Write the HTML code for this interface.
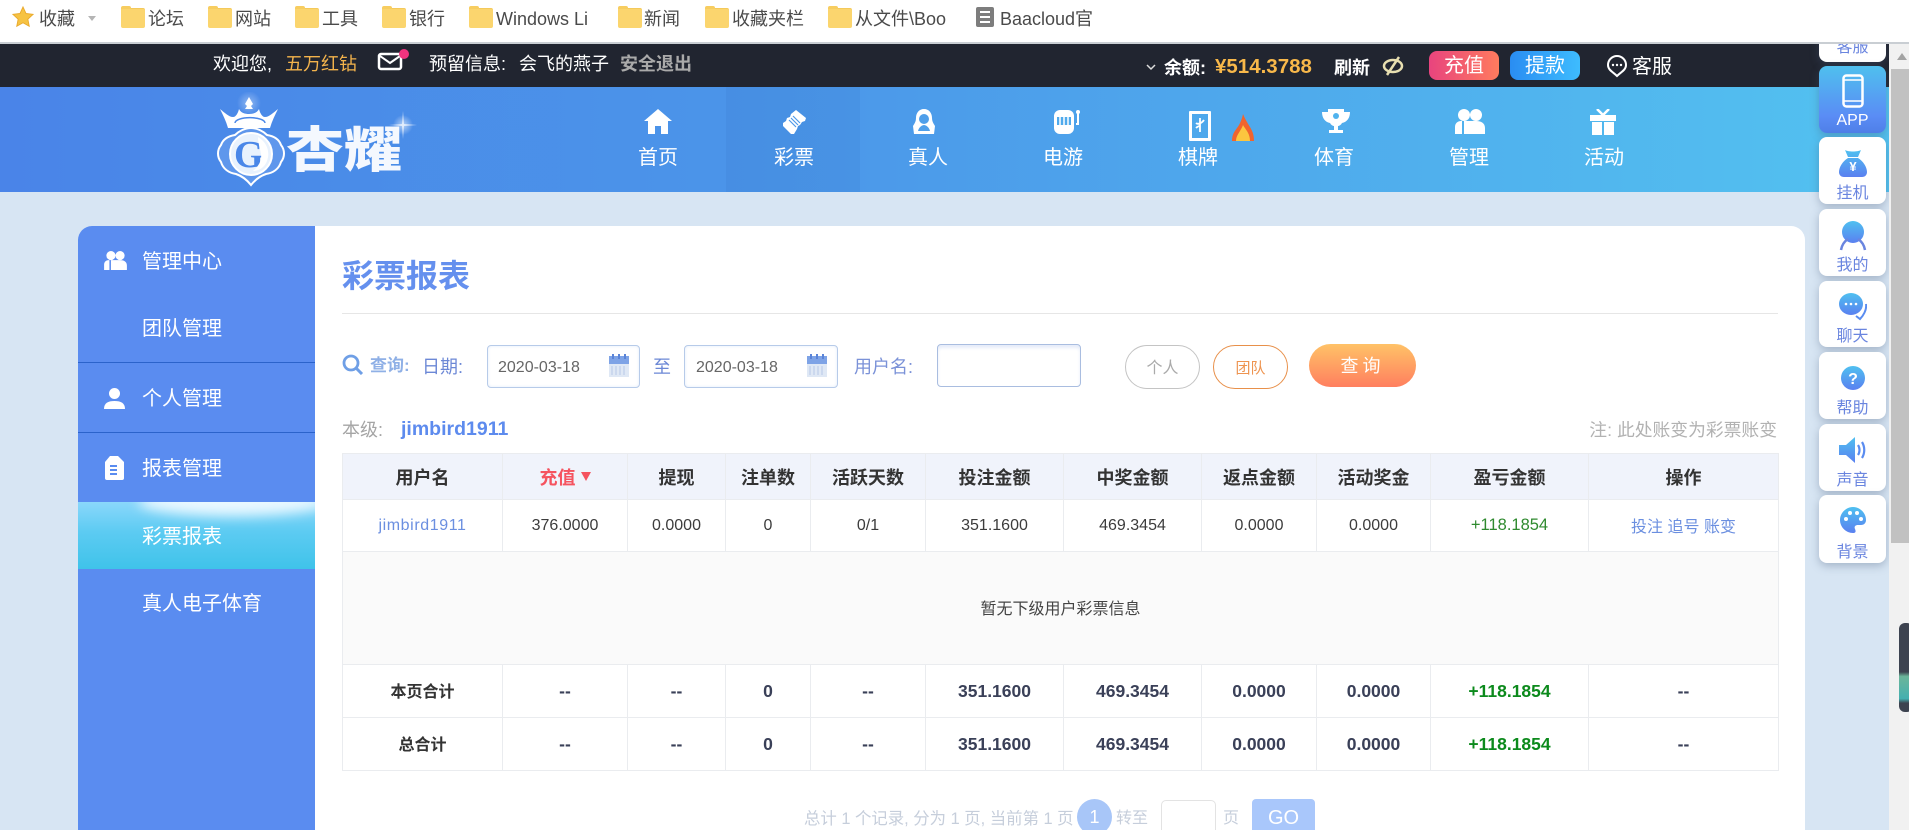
<!DOCTYPE html>
<html lang="zh-CN"><head><meta charset="utf-8"><title>彩票报表</title>
<style>
*{box-sizing:border-box}
html,body{margin:0;padding:0;width:1909px;height:830px;overflow:hidden;background:#d7e5f3;font-family:"Liberation Sans","Noto Sans CJK SC",sans-serif;color:#444}
#root{position:relative;width:1909px;height:830px;overflow:hidden}
.a{position:absolute}
.t{position:absolute;white-space:nowrap;line-height:1}
#bm{left:0;top:0;width:1909px;height:44px;background:#fff;border-bottom:2px solid #c9ced3;z-index:5}
#bm .t{font-size:18px;top:10px;color:#4a4a4a}
.f{position:absolute;top:8px;width:24px;height:20px;background:#fbd56e;border-radius:2px;border-top:1px solid #f4c95a}
.f:before{content:"";position:absolute;left:0;top:-3px;width:10px;height:3px;background:#f7cd60;border-radius:2px 2px 0 0}
#top{left:0;top:44px;width:1889px;height:43px;background:#212530}
#hd{left:0;top:87px;width:1889px;height:105px;background:linear-gradient(90deg,#4a84e8 0%,#4b95e9 40%,#53c2f0 100%)}
.n{position:absolute;top:148px;font-size:20px;color:#fff;line-height:1;transform:translateX(-50%);white-space:nowrap}
#panel{left:78px;top:226px;width:1727px;height:604px;background:#fff;border-radius:14px 14px 0 0;overflow:hidden}
#side{left:78px;top:226px;width:237px;height:604px;background:#5a8cf0;border-radius:14px 0 0 0}
.s{position:absolute;left:142px;font-size:20px;color:#fff;line-height:1;white-space:nowrap}
.hr{position:absolute;left:78px;width:237px;height:1px;background:#2b63cb}
table{position:absolute;left:342px;top:453px;width:1436px;border-collapse:collapse;table-layout:fixed;font-size:16px;color:#3c3c3c}
td,th{border:1px solid #eaecef;text-align:center;padding:0}
th{background:#f0f3fb;font-size:18px;color:#333;font-weight:700;height:46px}
.r td{height:53px}
.r.r1 td{height:52px}
.b td{font-weight:700;font-size:17.5px;color:#3a4058}
.b td:first-child{font-size:16px;color:#333;padding-bottom:3px}
.lk{color:#6b8fe0}
.inp{position:absolute;background:#fff;border:1px solid #b7cbe9;border-radius:4px;box-shadow:inset 0 0 3px #e3ecfa}
.side{position:absolute;left:1819px;width:67px;background:#fff;border-radius:8px;box-shadow:0 3px 9px rgba(70,90,120,.35);text-align:center;z-index:2}
.side span{position:absolute;left:0;right:0;bottom:2px;font-size:16px;line-height:1;color:#6a85df}
.side svg{position:absolute;left:50%;transform:translateX(-50%)}
</style></head><body>
<div id="root">

<svg width="0" height="0" style="position:absolute"><defs>
<linearGradient id="g" x1="0" y1="0" x2="0" y2="1"><stop offset="0" stop-color="#4fc0f0"/><stop offset="1" stop-color="#5a80f0"/></linearGradient>
<radialGradient id="gl"><stop offset="0" stop-color="#fff" stop-opacity=".85"/><stop offset="1" stop-color="#fff" stop-opacity="0"/></radialGradient>
</defs></svg>

<div id="bm" class="a">
<svg class="a" style="left:12px;top:6px" width="22" height="22" viewBox="0 0 24 24"><path d="M12 1l3.300 7.200 7.700.9-5.700 5.300 1.500 7.700L12 18.300 5.200 22.100l1.500-7.700L1 9.100l7.700-.9z" fill="#f6c343" stroke="#e9a92c" stroke-width="1"/></svg>
<div class="t" style="left:39px">收藏</div>
<div class="a" style="left:88px;top:16px;border:4px solid transparent;border-top:5px solid #b5b5b5"></div>
<div class="f" style="left:121px"></div><div class="t" style="left:148px">论坛</div>
<div class="f" style="left:208px"></div><div class="t" style="left:235px">网站</div>
<div class="f" style="left:295px"></div><div class="t" style="left:322px">工具</div>
<div class="f" style="left:382px"></div><div class="t" style="left:409px">银行</div>
<div class="f" style="left:469px"></div><div class="t" style="left:496px">Windows Li</div>
<div class="f" style="left:618px"></div><div class="t" style="left:644px">新闻</div>
<div class="f" style="left:705px"></div><div class="t" style="left:732px">收藏夹栏</div>
<div class="f" style="left:828px"></div><div class="t" style="left:855px">从文件\Boo</div>
<svg class="a" style="left:976px;top:7px" width="18" height="20" viewBox="0 0 18 20"><rect width="18" height="20" rx="2" fill="#7d7d7d"/><path d="M4 5h10M4 10h10M4 15h10" stroke="#fff" stroke-width="2"/></svg>
<div class="t" style="left:1000px">Baacloud官</div>
</div>

<div id="top" class="a"></div>
<div class="t" style="left:213px;top:55px;font-size:18px;color:#fff">欢迎您,</div>
<div class="t" style="left:285px;top:55px;font-size:18px;color:#f3b34c">五万红钻</div>
<svg class="a" style="left:377px;top:52px" width="27" height="19" viewBox="0 0 27 19"><rect x="2" y="2" width="22" height="15" rx="2" fill="none" stroke="#fff" stroke-width="2.500"/><path d="M3 4l10 7 10-7" fill="none" stroke="#fff" stroke-width="2"/></svg>
<div class="a" style="left:399px;top:49px;width:10px;height:10px;border-radius:50%;background:#f0347f"></div>
<div class="t" style="left:429px;top:55px;font-size:18px;color:#fff">预留信息:</div>
<div class="t" style="left:519px;top:55px;font-size:18px;color:#fff">会飞的燕子</div>
<div class="t" style="left:620px;top:55px;font-size:18px;font-weight:700;color:#aaa">安全退出</div>
<svg class="a" style="left:1146px;top:64px" width="10" height="7" viewBox="0 0 10 7"><path d="M1 1l4 4 4-4" fill="none" stroke="#ddd" stroke-width="1.500"/></svg>
<div class="t" style="left:1164px;top:59px;font-size:18px;font-weight:700;color:#fff">余额:</div>
<div class="t" style="left:1215px;top:57px;font-size:20.500px;font-weight:700;color:#f8b84a">¥514.3788</div>
<div class="t" style="left:1334px;top:59px;font-size:18px;font-weight:700;color:#fff">刷新</div>
<svg class="a" style="left:1382px;top:55px" width="23" height="22" viewBox="0 0 23 22"><ellipse cx="11" cy="11" rx="9" ry="6" fill="none" stroke="#e8dfb0" stroke-width="2.500"/><path d="M17 2L5 20" stroke="#e8dfb0" stroke-width="2.500"/></svg>
<div class="a" style="left:1429px;top:51px;width:70px;height:29px;border-radius:8px;background:linear-gradient(90deg,#e8447e,#ff7b5e);color:#fff;font-size:20px;text-align:center;line-height:31px">充值</div>
<div class="a" style="left:1510px;top:51px;width:70px;height:29px;border-radius:8px;background:linear-gradient(90deg,#2a8df2,#3ebcfe);color:#fff;font-size:20px;text-align:center;line-height:31px">提款</div>
<svg class="a" style="left:1606px;top:54px" width="22" height="24" viewBox="0 0 22 24"><path d="M11 2a9 9 0 0 1 9 9c0 5-5 7-9 11-4-4-9-6-9-11a9 9 0 0 1 9-9z" fill="none" stroke="#fff" stroke-width="2"/><circle cx="7" cy="11" r="1.200" fill="#fff"/><circle cx="11" cy="11" r="1.200" fill="#fff"/><circle cx="15" cy="11" r="1.200" fill="#fff"/></svg>
<div class="t" style="left:1632px;top:57px;font-size:20px;color:#fff">客服</div>

<div id="hd" class="a"></div>
<div class="a" style="left:726px;top:87px;width:134px;height:105px;background:rgba(30,70,150,.07)"></div>

<!-- logo -->
<svg class="a" style="left:212px;top:92px" width="80" height="98" viewBox="0 0 80 98">
<circle cx="37" cy="11" r="12" fill="url(#gl)" opacity=".45"/>
<path d="M37 5l4 7-2 2 2 3h-8l2-3-2-2z" fill="#fff"/>
<path d="M8 17c5 4 9 8 13 8 3 0 5-4 6-8 2 4 6 5 10 5s8-1 10-5c1 4 3 8 6 8 4 0 8-4 13-8-3 6-6 12-8 19H16C14 29 11 23 8 17z" fill="#fff"/>
<path d="M23 31a14 5 0 0 1 30 0" fill="none" stroke="#4a87e8" stroke-width="1.500"/>
<path d="M39 36c6 0 12 3 16 7 6 1 12 4 14 10 4 5 4 12 0 17-2 7-8 11-15 12-6 2-11 6-15 11-4-5-9-9-15-11-7-1-13-5-15-12-4-5-4-12 0-17 2-6 8-9 14-10 4-4 10-7 16-7z" fill="#5f97ec" stroke="#fff" stroke-width="2"/>
<circle cx="39" cy="62" r="21" fill="#e9f2fd" stroke="#fff" stroke-width="2"/>
<text x="22" y="75" font-family="Liberation Serif,serif" font-size="38" font-weight="700" fill="#4a87e8">G</text>
<path d="M46 45c10 6 12 16 9 24-2 6-8 10-14 10 6-5 9-11 8-17-1-6-3-11-3-17z" fill="#fff"/>
</svg>
<div class="t" style="left:286px;top:146px;font-size:58px;font-weight:900;color:#f4f8fe;font-family:'Noto Sans CJK SC',sans-serif;transform:translateY(-50%) scaleY(.84);transform-origin:50% 50%">杏耀</div>
<svg class="a" style="left:386px;top:108px" width="34" height="34" viewBox="0 0 34 34"><circle cx="17" cy="17" r="10" fill="url(#gl)" opacity=".7"/><path d="M17 3l1 13 13 1-13 1-1 13-1-13-13-1 13-1z" fill="#fff" opacity=".65"/></svg>

<!-- nav icons -->
<svg class="a" style="left:644px;top:109px" width="28" height="25" viewBox="0 0 28 25"><path d="M14 0l14 12h-4v13h-7v-8h-6v8H4V12H0z" fill="#fff"/></svg>
<svg class="a" style="left:781px;top:109px" width="26" height="26" viewBox="0 0 26 26"><path d="M15 1l10 8-1 3-3 1-2 3-2 1-1 3-3 5-3 0L2 17l0-3 3-2 1-3 3-1 1-3z" fill="#fff"/><path d="M10 9l7 7M12 7l7 7M8 11l7 7" stroke="#4f9ae9" stroke-width="1.200"/></svg>
<svg class="a" style="left:912px;top:109px" width="24" height="26" viewBox="0 0 24 26"><path d="M12 0c5 0 8 4 8 9 0 3 1 5 3 8l-1 8H2l-1-8c2-3 3-5 3-8 0-5 3-9 8-9z" fill="#fff"/><circle cx="12" cy="10" r="5" fill="#4f9fea"/><path d="M6 22c1-4 4-6 6-6s5 2 6 6z" fill="#4f9fea"/></svg>
<svg class="a" style="left:1053px;top:109px" width="28" height="26" viewBox="0 0 28 26"><rect x="1" y="1" width="20" height="24" rx="6" fill="#fff"/><rect x="4" y="8" width="14" height="8" fill="#50aaec"/><path d="M7 8v8M11 8v8M15 8v8" stroke="#fff" stroke-width="1.500"/><path d="M25 3v12h-2" stroke="#fff" stroke-width="2" fill="none"/><circle cx="25" cy="3" r="2" fill="#fff"/></svg>
<svg class="a" style="left:1189px;top:111px" width="22" height="30" viewBox="0 0 22 30"><rect width="22" height="30" rx="1" fill="#fff"/><rect x="3" y="3" width="16" height="24" fill="#4ea8ec"/><path d="M11 7v14M7 12c2 2 6 0 8-3M11 15c-2 0-3 1-4 2" stroke="#fff" stroke-width="1.800" fill="none"/></svg>
<svg class="a" style="left:1230px;top:114px" width="26" height="27" viewBox="0 0 26 27"><path d="M13 0c2 5 4 8 7 13 3 5 4 9 4 14H2c0-6 2-9 5-13 3-4 5-9 6-14z" fill="#f0642e"/><path d="M13 11c2 4 7 8 7 16H6c0-6 5-10 7-16z" fill="#fcc63f"/></svg>
<svg class="a" style="left:1322px;top:109px" width="28" height="26" viewBox="0 0 28 26"><path d="M6 0h16v3h6c0 6-3 10-8 11-1 2-3 3-4 3v4h5v3H7v-3h5v-4c-1 0-3-1-4-3C3 13 0 9 0 3h6z" fill="#fff"/><circle cx="14" cy="7" r="3" fill="#50b3ee"/></svg>
<svg class="a" style="left:1455px;top:109px" width="30" height="25" viewBox="0 0 30 25"><circle cx="9" cy="6" r="6" fill="#fff"/><circle cx="21" cy="6" r="6" fill="#fff"/><path d="M0 25v-7c0-4 3-6 6-6h1v13zM9 25V12h12c5 0 9 2 9 7v6z" fill="#fff"/></svg>
<svg class="a" style="left:1590px;top:109px" width="26" height="26" viewBox="0 0 26 26"><rect x="0" y="6" width="26" height="6" fill="#fff"/><path d="M2 13h10v13H2zM14 13h10v13H14z" fill="#fff"/><path d="M13 6L7 0M13 6l6-6" stroke="#fff" stroke-width="2.500"/></svg>

<div class="n" style="left:658px">首页</div>
<div class="n" style="left:794px">彩票</div>
<div class="n" style="left:928px">真人</div>
<div class="n" style="left:1063px">电游</div>
<div class="n" style="left:1198px">棋牌</div>
<div class="n" style="left:1334px">体育</div>
<div class="n" style="left:1469px">管理</div>
<div class="n" style="left:1604px">活动</div>

<div id="panel" class="a"></div>
<div id="side" class="a"></div>
<svg class="a" style="left:104px;top:251px" width="23" height="19" viewBox="0 0 30 25"><circle cx="9" cy="6" r="6" fill="#fff"/><circle cx="21" cy="6" r="6" fill="#fff"/><path d="M0 25v-7c0-4 3-6 6-6h1v13zM9 25V12h12c5 0 9 2 9 7v6z" fill="#fff"/></svg>
<div class="s" style="top:252px">管理中心</div>
<div class="s" style="top:319px">团队管理</div>
<div class="hr" style="top:362px"></div>
<svg class="a" style="left:104px;top:388px" width="21" height="21" viewBox="0 0 21 21"><circle cx="10.500" cy="5.500" r="5.500" fill="#fff"/><path d="M0 21c0-6 4-8 10.500-8S21 15 21 21z" fill="#fff"/></svg>
<div class="s" style="top:389px">个人管理</div>
<div class="hr" style="top:432px"></div>
<svg class="a" style="left:105px;top:456px" width="19" height="24" viewBox="0 0 19 24"><path d="M5 0h8l6 6v16a2 2 0 0 1-2 2H2a2 2 0 0 1-2-2V6z" fill="#fff"/><path d="M5 10h7M5 14h7M5 18h7" stroke="#5a8cf0" stroke-width="2"/></svg>
<div class="s" style="top:459px">报表管理</div>
<div class="a" style="left:78px;top:502px;width:237px;height:67px;overflow:hidden;background:linear-gradient(180deg,#8ad7fb 0%,#5ccbf2 45%,#3fc3ea 100%)">
<div class="a" style="left:60px;top:-14px;width:190px;height:28px;border-radius:50%;background:#e9f8ff;filter:blur(6px)"></div>
</div>
<div class="s" style="top:527px">彩票报表</div>
<div class="s" style="top:594px">真人电子体育</div>

<div class="t" style="left:342px;top:260px;font-size:32px;font-weight:700;color:#6590ee">彩票报表</div>
<div class="a" style="left:342px;top:313px;width:1436px;height:1px;background:#e6e6e6"></div>

<svg class="a" style="left:342px;top:354px" width="22" height="21" viewBox="0 0 22 21"><circle cx="9" cy="9" r="7" fill="none" stroke="#6f9fe6" stroke-width="2.800"/><path d="M14 14l6 6" stroke="#6f9fe6" stroke-width="3"/></svg>
<div class="t" style="left:370px;top:357px;font-size:17px;font-weight:700;color:#8fb0e6">查询:</div>
<div class="t" style="left:422px;top:358px;font-size:18px;color:#6c88d6">日期:</div>
<div class="inp" style="left:487px;top:345px;width:153px;height:43px"></div>
<div class="t" style="left:498px;top:360px;font-size:16px;color:#666">2020-03-18</div>
<svg class="a" style="left:609px;top:354px" width="20" height="23" viewBox="0 0 20 23"><rect y="2" width="20" height="21" fill="#dfe8f5"/><rect y="2" width="20" height="8" fill="#7ea3e6"/><path d="M4 0v5M10 0v5M16 0v5" stroke="#5a84d8" stroke-width="2"/><path d="M3 12v9M7 12v9M11 12v9M15 12v9" stroke="#b7c8e6"/></svg>
<div class="t" style="left:653px;top:358px;font-size:18px;color:#6c88d6">至</div>
<div class="inp" style="left:684px;top:345px;width:154px;height:43px"></div>
<div class="t" style="left:696px;top:360px;font-size:16px;color:#666">2020-03-18</div>
<svg class="a" style="left:807px;top:354px" width="20" height="23" viewBox="0 0 20 23"><rect y="2" width="20" height="21" fill="#dfe8f5"/><rect y="2" width="20" height="8" fill="#7ea3e6"/><path d="M4 0v5M10 0v5M16 0v5" stroke="#5a84d8" stroke-width="2"/><path d="M3 12v9M7 12v9M11 12v9M15 12v9" stroke="#b7c8e6"/></svg>
<div class="t" style="left:854px;top:358px;font-size:18px;color:#7b92d8">用户名:</div>
<div class="inp" style="left:937px;top:344px;width:144px;height:43px;border-color:#a9bde0;box-shadow:inset 0 3px 3px #e6ecf9"></div>
<div class="a" style="left:1125px;top:345px;width:75px;height:44px;border:1px solid #c4c4c4;border-radius:22px;text-align:center;font-size:16px;line-height:45px;color:#aaa">个人</div>
<div class="a" style="left:1213px;top:345px;width:75px;height:44px;border:1px solid #e8904a;border-radius:22px;text-align:center;font-size:15px;line-height:45px;color:#ee9450">团队</div>
<div class="a" style="left:1309px;top:344px;width:107px;height:43px;border-radius:22px;background:linear-gradient(180deg,#ffc267,#ff7f5f);text-align:center;font-size:18px;line-height:44px;color:#fff;letter-spacing:4px">查询</div>

<div class="t" style="left:342px;top:421px;font-size:18px;color:#a5a5a5">本级:</div>
<div class="t" style="left:401px;top:420px;font-size:19.500px;font-weight:700;color:#5d8bee">jimbird1911</div>
<div class="t" style="right:132px;top:422px;font-size:17.800px;color:#b2b2b2">注: 此处账变为彩票账变</div>

<table>
<colgroup><col style="width:160px"><col style="width:125px"><col style="width:98px"><col style="width:85px"><col style="width:115px"><col style="width:138px"><col style="width:138px"><col style="width:115px"><col style="width:114px"><col style="width:158px"><col style="width:190px"></colgroup>
<tr><th>用户名</th><th style="color:#f5535f">充值 <i style="display:inline-block;border:5.500px solid transparent;border-top:9px solid #f5535f;border-bottom:0;vertical-align:3px"></i></th><th>提现</th><th>注单数</th><th>活跃天数</th><th>投注金额</th><th>中奖金额</th><th>返点金额</th><th>活动奖金</th><th>盈亏金额</th><th>操作</th></tr>
<tr class="r r1"><td class="lk" style="letter-spacing:.6px">jimbird1911</td><td>376.0000</td><td>0.0000</td><td>0</td><td>0/1</td><td>351.1600</td><td>469.3454</td><td>0.0000</td><td>0.0000</td><td style="color:#2f8a2f;font-size:16.500px">+118.1854</td><td class="lk" style="padding-bottom:2px">投注 追号 账变</td></tr>
<tr><td colspan="11" style="height:113px;background:#fafafa;color:#444;padding-bottom:3px">暂无下级用户彩票信息</td></tr>
<tr class="r b"><td>本页合计</td><td>--</td><td>--</td><td>0</td><td>--</td><td>351.1600</td><td>469.3454</td><td>0.0000</td><td>0.0000</td><td style="color:#0c8a1c">+118.1854</td><td>--</td></tr>
<tr class="r b"><td>总合计</td><td>--</td><td>--</td><td>0</td><td>--</td><td>351.1600</td><td>469.3454</td><td>0.0000</td><td>0.0000</td><td style="color:#0c8a1c">+118.1854</td><td>--</td></tr>
</table>

<div class="t" style="left:804px;top:811px;font-size:16.400px;color:#c6cedb">总计 1 个记录, 分为 1 页, 当前第 1 页</div>
<div class="a" style="left:1077px;top:799px;width:35px;height:36px;border-radius:50%;background:#a8c6f8;color:#fff;text-align:center;font-size:18px;line-height:36px">1</div>
<div class="t" style="left:1116px;top:811px;font-size:16px;color:#c6cedb">转至</div>
<div class="a" style="left:1161px;top:800px;width:55px;height:40px;border:1px solid #e3e3e3;border-radius:5px;background:#fff"></div>
<div class="t" style="left:1223px;top:811px;font-size:16px;color:#c6cedb">页</div>
<div class="a" style="left:1252px;top:799px;width:63px;height:36px;border-radius:4px;background:#a9c7fb;color:#fff;text-align:center;font-size:20px;line-height:38px">GO</div>

<!-- floating side -->
<div class="side" style="top:-5px;height:67px"><span style="bottom:6px">客服</span></div>
<div class="side" style="top:66px;height:67px;background:linear-gradient(180deg,#4fc0ee,#5a8cf5 75%,#4f7fe8)">
<svg style="top:8px" width="22" height="34" viewBox="0 0 22 34"><rect x="1.500" y="1.500" width="19" height="31" rx="3" fill="none" stroke="#fff" stroke-width="2.500"/><path d="M1 6h20M1 27h20" stroke="#fff" stroke-width="1.500"/></svg>
<span style="color:#fff;bottom:4px">APP</span></div>
<div class="side" style="top:137px;height:67px">
<svg style="top:12px" width="28" height="28" viewBox="0 0 28 28"><path d="M6 1c3 2 13 2 16 0l-3 7H9zM9 9h10c5 3 9 9 9 14 0 3-2 5-5 5H5c-3 0-5-2-5-5 0-5 4-11 9-14z" fill="url(#g)"/><text x="14" y="22" font-size="13" font-weight="700" fill="#fff" text-anchor="middle" font-family="Liberation Sans,sans-serif">¥</text></svg>
<span>挂机</span></div>
<div class="side" style="top:209px;height:67px">
<svg style="top:12px" width="28" height="30" viewBox="0 0 28 30"><circle cx="14" cy="11" r="11" fill="url(#g)"/><path d="M2 29c1-6 4-9 7-11M26 29c-1-6-4-9-7-11" fill="none" stroke="#6a85df" stroke-width="2.500"/></svg>
<span>我的</span></div>
<div class="side" style="top:281px;height:66px">
<svg style="top:12px" width="28" height="28" viewBox="0 0 28 28"><ellipse cx="12" cy="11" rx="12" ry="11" fill="url(#g)"/><circle cx="7" cy="11" r="1.300" fill="#fff"/><circle cx="12" cy="11" r="1.300" fill="#fff"/><circle cx="17" cy="11" r="1.300" fill="#fff"/><path d="M27 11c1 6-3 12-6 15l-4-3" fill="none" stroke="#5a8cf0" stroke-width="2"/></svg>
<span>聊天</span></div>
<div class="side" style="top:352px;height:67px">
<svg style="top:14px" width="24" height="24" viewBox="0 0 24 24"><circle cx="12" cy="12" r="12" fill="url(#g)"/><text x="12" y="18" font-size="16" font-weight="700" fill="#fff" text-anchor="middle" font-family="Liberation Sans,sans-serif">?</text></svg>
<span>帮助</span></div>
<div class="side" style="top:424px;height:67px">
<svg style="top:13px" width="28" height="26" viewBox="0 0 28 26"><path d="M0 8h7l9-8v26l-9-8H0z" fill="url(#g)"/><path d="M19 8c2 3 2 7 0 10M23 5c3 5 3 11 0 16" fill="none" stroke="#5a8cf0" stroke-width="2.200"/></svg>
<span>声音</span></div>
<div class="side" style="top:495px;height:68px">
<svg style="top:12px" width="26" height="26" viewBox="0 0 26 26"><path d="M13 0C6 0 0 6 0 13s6 13 13 13c3 0 3-2 2-4s0-4 3-4h3c3 0 5-2 5-5C26 6 20 0 13 0z" fill="url(#g)"/><circle cx="6" cy="12" r="2" fill="#fff"/><circle cx="10" cy="6" r="2" fill="#fff"/><circle cx="17" cy="6" r="2" fill="#fff"/><circle cx="21" cy="12" r="2" fill="#fff"/></svg>
<span>背景</span></div>

<!-- scrollbar -->
<div class="a" style="left:1889px;top:44px;width:20px;height:786px;background:#f1f1f1;z-index:3"></div>
<div class="a" style="left:1891px;top:69px;width:18px;height:474px;background:#c1c1c1;z-index:3"></div>
<div class="a" style="left:1897px;top:53px;border:5px solid transparent;border-bottom:7px solid #a3a3a3;border-top:0;z-index:3"></div>
<div class="a" style="left:1899px;top:623px;width:14px;height:89px;border-radius:6px;background:linear-gradient(180deg,#3d4350 55%,#6bb59a 60%,#45b0b0 85%,#3d4350 90%);z-index:3"></div>
</div>
</body></html>
